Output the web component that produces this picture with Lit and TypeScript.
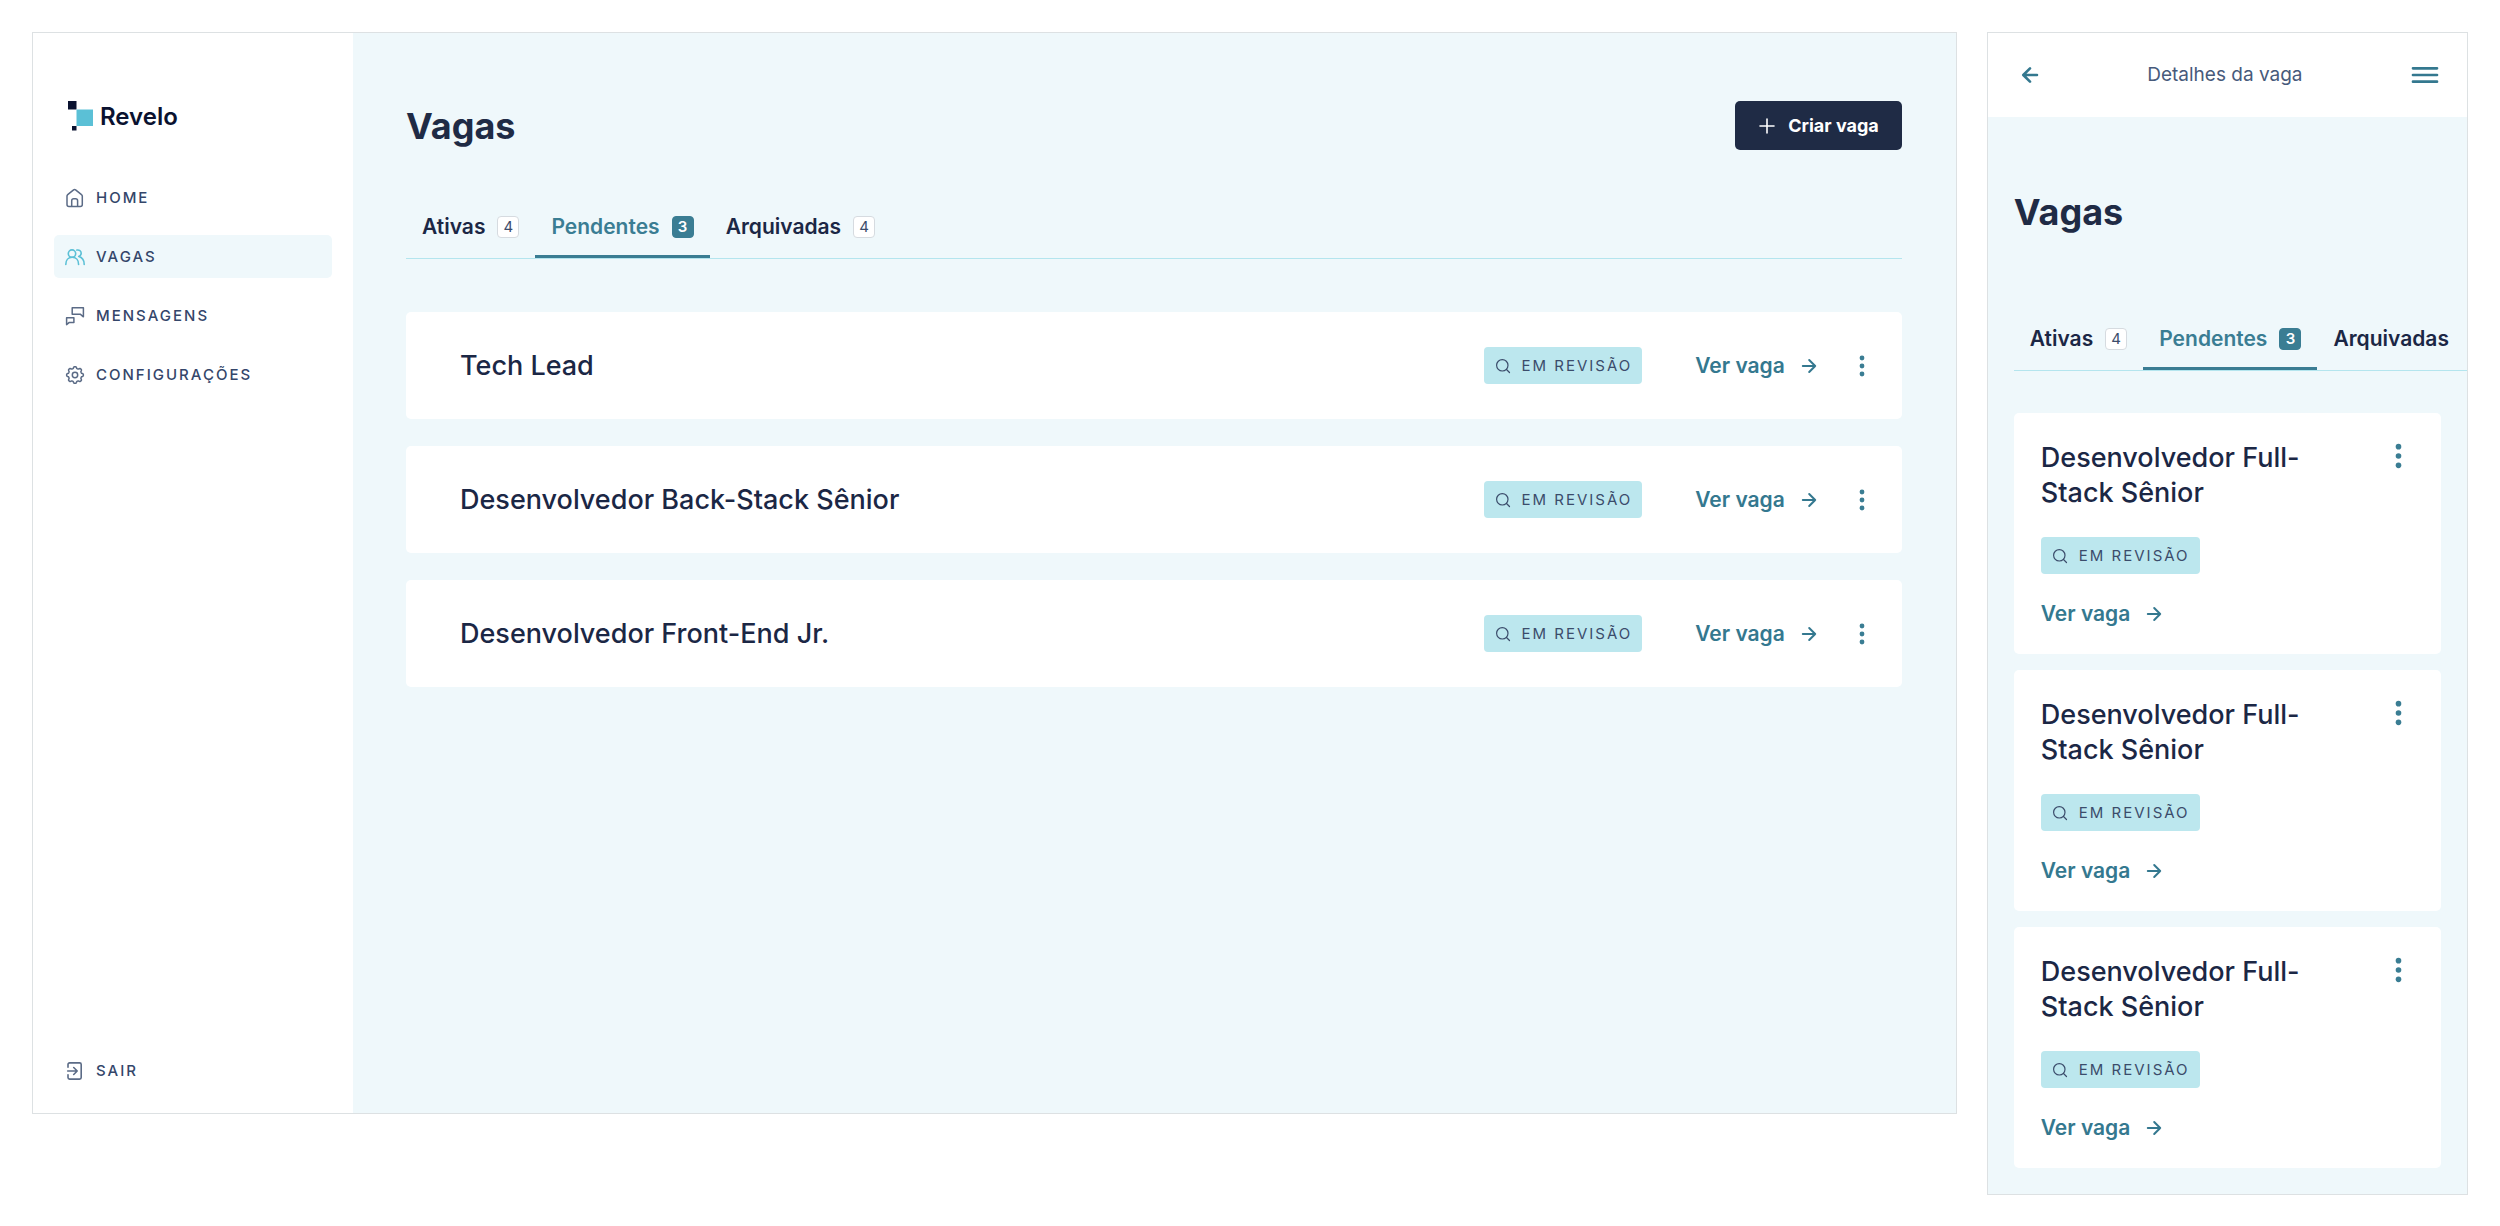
import { LitElement, html, css, svg, nothing } from "lit";
import { customElement, property } from "lit/decorators.js";
import { classMap } from "lit/directives/class-map.js";

const gearPath = (() => {
  const points: string[] = [];
  for (let i = 0; i < 96; i++) {
    const angle = (i / 96) * Math.PI * 2;
    const wave = Math.tanh(2 * Math.cos(angle * 8)) * 0.9;
    const r = 7.5 + wave;
    points.push(`${(10 + r * Math.cos(angle)).toFixed(2)} ${(10 + r * Math.sin(angle)).toFixed(2)}`);
  }
  return `M${points.join("L")}Z`;
})();

const shapes: Record<string, { w: number; h: number; stroke: number; body: unknown }> = {
  home: {
    w: 20, h: 20, stroke: 1.5,
    body: svg`<path d="M2 8.1a2 2 0 0 1 .7-1.5L8.6 1.9a1.6 1.6 0 0 1 2 0l5.900 4.700a2 2 0 0 1 .8 1.500v8.300a2 2 0 0 1-2 2H4a2 2 0 0 1-2-2Z"/><path d="M6.700 18.200v-5.500a2 2 0 0 1 2-2h1.900a2 2 0 0 1 2 2v5.500"/>`,
  },
  users: {
    w: 20, h: 20, stroke: 1.6,
    body: svg`<circle cx="7" cy="6.600" r="3.700"/><path d="M.8 17.400c0-4 2.500-7.100 6.400-7.100s6.400 3.100 6.400 7.100"/><path d="M11.900 3.100c2.300-.6 4.300 1 4.300 3.100 0 1.500-1 2.700-2.500 3.300 3.200.8 5.500 3.900 5.500 7.900"/>`,
  },
  messages: {
    w: 20, h: 20, stroke: 1.5,
    body: svg`<path d="M7.200 1.800h11.200v9l-3.200-2.600h-8z"/><path d="M1.600 11.800h7.300v4.600H4.300l-2.700 2.200z"/>`,
  },
  settings: {
    w: 20, h: 20, stroke: 1.5,
    body: svg`<path d="${gearPath}"/><circle cx="10" cy="10" r="2.700"/>`,
  },
  exit: {
    w: 20, h: 20, stroke: 1.6,
    body: svg`<path d="M3 6.200V3.500a1.600 1.600 0 0 1 1.600-1.600h10a1.600 1.600 0 0 1 1.600 1.600v13a1.600 1.600 0 0 1-1.600 1.600h-10A1.600 1.600 0 0 1 3 16.500v-2.700"/><path d="M2.700 10h9.500M8.700 6.500l3.500 3.500-3.500 3.500"/>`,
  },
  plus: { w: 16, h: 16, stroke: 1.6, body: svg`<path d="M8 1v14M1 8h14"/>` },
  search: {
    w: 16, h: 16, stroke: 1.2,
    body: svg`<circle cx="7.300" cy="7.300" r="5.700"/><path d="m11.500 11.500 3 3"/>`,
  },
  arrow: { w: 16, h: 16, stroke: 2, body: svg`<path d="M1.800 8h12.400M8.200 2l6 6-6 6"/>` },
  back: { w: 18, h: 18, stroke: 2.600, body: svg`<path d="M16 9H2.500M9 2.300 2.300 9 9 15.700"/>` },
  menu: { w: 28, h: 20, stroke: 2.700, body: svg`<path d="M2 3.300h24M2 10h24M2 16.700h24"/>` },
};

const icon = (name: string) => {
  const s = shapes[name];
  return html`<svg class="icon" width=${s.w} height=${s.h} viewBox="0 0 ${s.w} ${s.h}" fill="none"
    stroke="currentColor" stroke-width=${s.stroke} stroke-linecap="round" stroke-linejoin="round"
    aria-hidden="true">${s.body}</svg>`;
};

const base = css`
  * { box-sizing: border-box; }
  h1, h2, ul { margin: 0; padding: 0; }
  ul { list-style: none; }
  a { color: inherit; text-decoration: none; }
  button {
    margin: 0; padding: 0; border: 0; background: none;
    font: inherit; color: inherit; cursor: pointer;
  }
  .icon { display: block; flex: none; }
`;

@customElement("job-tabs")
export class JobTabs extends LitElement {
  @property({ type: Boolean }) compact = false;

  static styles = [base, css`
    :host { display: block; }
    .tabs { display: flex; border-bottom: 1px solid #b4e5ee; }
    .tab {
      display: flex; align-items: center; flex: none; gap: 12px;
      padding: 0 16px 15px; border-bottom: 3px solid transparent;
      font-size: 21px; line-height: 26px; font-weight: 600; color: #1b2745;
    }
    .tab.active { color: #3a7d93; border-bottom-color: #3a7d93; }
    .count {
      width: 22px; height: 22px; border: 1px solid #d6dbe0; border-radius: 4px;
      background: #fff; color: #3b4c6b;
      font-size: 15px; line-height: 20px; font-weight: 400; text-align: center;
    }
    .active .count { background: #3a7d93; border-color: #3a7d93; color: #fff; font-weight: 600; }
  `];

  render() {
    const tabs = [
      { label: "Ativas", count: 4 },
      { label: "Pendentes", count: 3, active: true },
      { label: "Arquivadas", count: this.compact ? undefined : 4 },
    ];
    return html`<div class="tabs" role="tablist">
      ${tabs.map((t) => html`<button role="tab" aria-selected=${t.active ? "true" : "false"}
        class=${classMap({ tab: true, active: !!t.active })}>
        <span>${t.label}</span>${t.count === undefined ? nothing : html`<span class="count">${t.count}</span>`}
      </button>`)}
    </div>`;
  }
}

@customElement("job-card")
export class JobCard extends LitElement {
  @property() name = "";
  @property({ type: Boolean, reflect: true }) compact = false;

  static styles = [base, css`
    :host { display: block; }
    .card {
      display: grid; grid-template-columns: 1fr auto auto auto; align-items: center;
      padding: 35px 30px 35px 54px; border-radius: 5px; background: #fff;
    }
    .title { font-size: 27px; line-height: 35px; font-weight: 500; color: #1b2745; }
    .status {
      display: flex; align-items: center; gap: 11px; height: 37px; width: max-content;
      padding: 0 10px 0 11px; border-radius: 4px; background: #bce7ee; color: #3b4c6b;
      font-size: 15px; line-height: 20px; letter-spacing: 2px; text-transform: uppercase;
    }
    .view {
      display: flex; align-items: center; gap: 16px; margin-left: 53px; width: max-content;
      color: #34788f; font-size: 21px; line-height: 26px; font-weight: 600;
    }
    .more { display: flex; justify-content: center; width: 20px; margin-left: 35px; color: #3a7d93; }
    .dots { display: block; width: 6px; height: 22px; }
    :host([compact]) .card {
      grid-template-columns: 1fr auto; row-gap: 27px;
      padding: 27px 33px 27px 27px;
    }
    :host([compact]) .title { padding-right: 32px; }
    :host([compact]) .more { align-self: start; margin: 3px 0 0; }
    :host([compact]) .dots { width: 7px; height: 26px; }
    :host([compact]) .status { grid-column: 1 / -1; }
    :host([compact]) .view { grid-column: 1 / -1; margin: 0; }
  `];

  render() {
    const title = html`<h2 class="title">${this.name}</h2>`;
    const status = html`<span class="status">${icon("search")}<span>Em revisão</span></span>`;
    const view = html`<a class="view" href="#vaga">Ver vaga ${icon("arrow")}</a>`;
    const more = html`<button class="more" aria-label="Mais opções">
      <svg class="dots" viewBox="0 0 6 22" fill="currentColor" aria-hidden="true">
        <circle cx="3" cy="3" r="2.400"/><circle cx="3" cy="11" r="2.400"/><circle cx="3" cy="19" r="2.400"/>
      </svg></button>`;
    return html`<article class="card">
      ${this.compact ? html`${title}${more}${status}${view}` : html`${title}${status}${view}${more}`}
    </article>`;
  }
}

@customElement("app-root")
export class AppRoot extends LitElement {
  static styles = [base, css`
    :host {
      display: block; background: #fff; color: #1f2b45;
      font-family: Inter, "Liberation Sans", sans-serif;
      -webkit-font-smoothing: antialiased;
    }
    .page {
      display: grid; grid-template-columns: minmax(0, 4fr) minmax(0, 1fr);
      align-items: start; gap: 30px; padding: 32px;
    }
    .frame { border: 1px solid #dde1e3; }
    .desktop { display: flex; min-height: calc(100vh - 144px); }
    .sidebar {
      display: flex; flex-direction: column; flex: none; width: 320px;
      padding: 66px 21px 21px; background: #fff;
    }
    .logo {
      display: flex; align-items: center; gap: 6px; margin: 0 0 43px 14px;
      font-size: 24px; line-height: 32px; font-weight: 600; color: #0a1230;
    }
    .logo span { padding-top: 2px; }
    .mark { display: block; width: 26px; height: 32px; }
    .menu { display: flex; flex-direction: column; gap: 16px; }
    .item {
      display: flex; align-items: center; gap: 11px; height: 43px; padding: 0 11px;
      border-radius: 5px; color: #5b6b86;
    }
    .item.current { background: #eff8fb; color: #5bc0d6; }
    .label {
      color: #34466a; font-size: 15px; line-height: 20px; font-weight: 500;
      letter-spacing: 2px; text-transform: uppercase;
    }
    .leave { margin-top: auto; }
    .main { flex: 1; min-width: 0; padding: 68px 54px 54px 53px; background: #eff8fb; }
    .head { display: flex; align-items: center; justify-content: space-between; margin-bottom: 64px; }
    .heading { font-size: 36px; line-height: 40px; font-weight: 700; color: #1f2b45; }
    .create {
      display: flex; align-items: center; gap: 13px; height: 49px; padding: 0 23px 0 24px;
      border-radius: 5px; background: #1f2b45; color: #fff;
      font-size: 18px; line-height: 24px; font-weight: 700;
    }
    .list { display: flex; flex-direction: column; gap: 27px; margin-top: 53px; }
    .mobile { background: #eff8fb; }
    .bar {
      display: flex; align-items: center; justify-content: space-between; height: 84px;
      padding: 0 28px 0 33px; background: #fff; color: #34788f;
    }
    .where { color: #475a7b; font-size: 19px; line-height: 24px; font-weight: 400; }
    .body { padding: 75px 0 26px 26px; }
    .body .heading { margin-bottom: 94px; }
    .body .list { gap: 16px; margin-top: 42px; padding-right: 26px; }
  `];

  render() {
    const nav = [
      { label: "Home", icon: "home" },
      { label: "Vagas", icon: "users", current: true },
      { label: "Mensagens", icon: "messages" },
      { label: "Configurações", icon: "settings" },
    ];
    const jobs = ["Tech Lead", "Desenvolvedor Back-Stack Sênior", "Desenvolvedor Front-End Jr."];
    const mobileJobs = Array(3).fill("Desenvolvedor Full-Stack Sênior");

    return html`<div class="page">
      <section class="frame desktop">
        <aside class="sidebar">
          <a class="logo" href="#home">
            <svg class="mark" viewBox="0 0 26 32" aria-hidden="true">
              <path fill="#0a1230" d="M0 1h8.500v8.500H0zM4 26h4.500v4.500H4z"/>
              <path fill="#5bc0d6" d="M8.500 9.500H25V26H8.500z"/>
            </svg>
            <span>Revelo</span>
          </a>
          <nav class="menu">
            ${nav.map((n) => html`<a href="#${n.icon}" class=${classMap({ item: true, current: !!n.current })}>
              ${icon(n.icon)}<span class="label">${n.label}</span></a>`)}
          </nav>
          <a class="item leave" href="#sair">${icon("exit")}<span class="label">Sair</span></a>
        </aside>
        <main class="main">
          <header class="head">
            <h1 class="heading">Vagas</h1>
            <button class="create">${icon("plus")}<span>Criar vaga</span></button>
          </header>
          <job-tabs></job-tabs>
          <ul class="list">${jobs.map((j) => html`<li><job-card .name=${j}></job-card></li>`)}</ul>
        </main>
      </section>
      <section class="frame mobile">
        <header class="bar">
          <button aria-label="Voltar">${icon("back")}</button>
          <span class="where">Detalhes da vaga</span>
          <button aria-label="Menu">${icon("menu")}</button>
        </header>
        <div class="body">
          <h1 class="heading">Vagas</h1>
          <job-tabs compact></job-tabs>
          <ul class="list">${mobileJobs.map((j) => html`<li><job-card compact .name=${j}></job-card></li>`)}</ul>
        </div>
      </section>
    </div>`;
  }
}
